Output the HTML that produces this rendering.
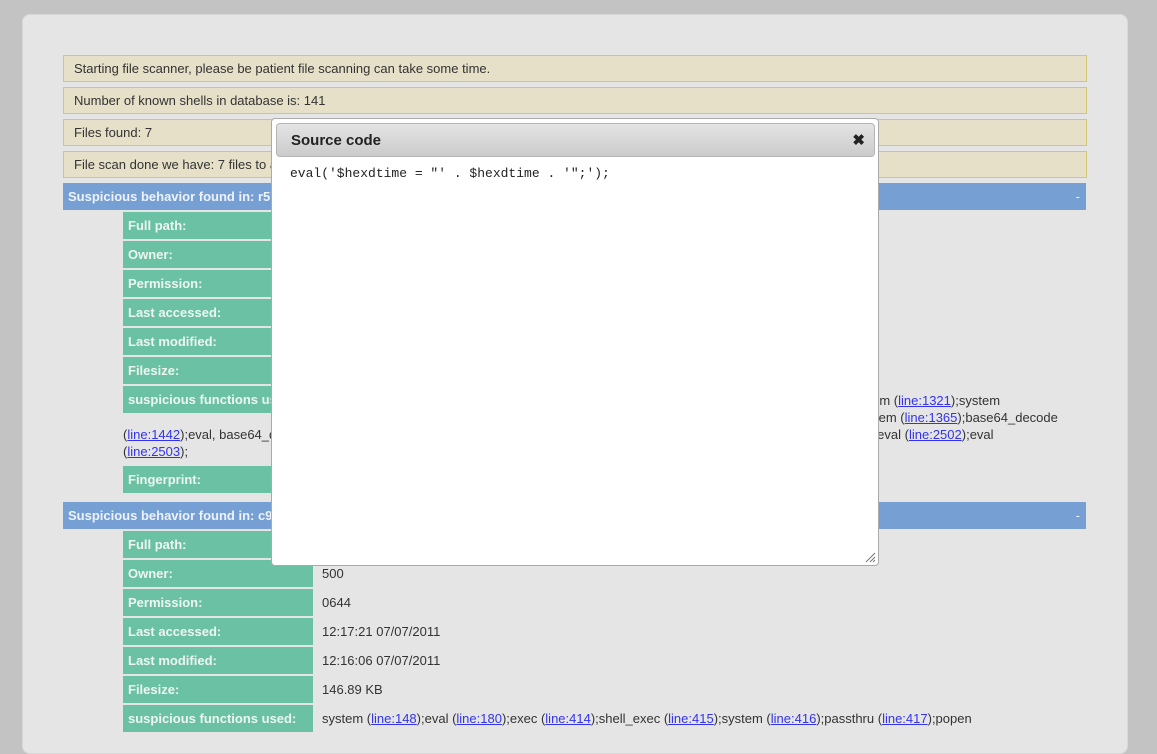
<!DOCTYPE html>
<html><head><style>
*{margin:0;padding:0;box-sizing:border-box}
body{width:1157px;height:729px;background:#c3c3c3;font-family:Tahoma,"Liberation Sans",sans-serif;font-size:13px;color:#333;position:relative;overflow:hidden}
.wrap{position:absolute;left:22px;top:14px;width:1106px;height:740px;background:#e5e5e5;border-radius:8px;border:1px solid #d8d8d8}
.a{position:absolute}
.msg{position:absolute;left:63px;width:1024px;height:27px;background:#e5e0c7;border:1px solid #d5c670;padding-left:10px;line-height:25px}
.bar{position:absolute;left:63px;width:1023px;height:27px;background:#76a0d3;color:#eef2fa;font-weight:bold;padding-left:5px;line-height:27px}
.bar span{position:absolute;right:6px;top:0;font-weight:normal}
.lab{position:absolute;left:123px;width:190px;height:27px;background:#6bc1a4;color:#eef6f1;font-weight:bold;padding-left:5px;line-height:27px}
.val{position:absolute;left:322px;line-height:27px}
a{color:#3333ee;text-decoration:underline}
.dlg{position:absolute;left:271px;top:118px;width:608px;height:448px;background:#fff;border:1px solid #aaa;border-radius:4px}
.hd{position:absolute;left:4px;top:4px;width:599px;height:34px;border:1px solid #b5b5b5;border-radius:4px;background:linear-gradient(#e4e4e4,#cbcbcb);font-weight:bold;font-size:15px;color:#222;padding-left:14px;line-height:34px}
.x{position:absolute;right:9px;top:0;font-size:15px;color:#222}
pre{position:absolute;left:18px;top:47px;font-family:"Liberation Mono",monospace;font-size:13px;color:#222}
</style></head><body>
<div class="wrap"></div>
<div class="msg" style="top:55px">Starting file scanner, please be patient file scanning can take some time.</div>
<div class="msg" style="top:87px">Number of known shells in database is: 141</div>
<div class="msg" style="top:119px">Files found: 7</div>
<div class="msg" style="top:151px">File scan done we have: 7 files to analyze</div>
<div class="bar" style="top:183px">Suspicious behavior found in: r57.php<span>-</span></div>
<div class="lab" style="top:212px">Full path:</div>
<div class="lab" style="top:241px">Owner:</div>
<div class="lab" style="top:270px">Permission:</div>
<div class="lab" style="top:299px">Last accessed:</div>
<div class="lab" style="top:328px">Last modified:</div>
<div class="lab" style="top:357px">Filesize:</div>
<div class="lab" style="top:386px">suspicious functions used:</div>
<div class="a" style="left:862px;top:392px;line-height:17px">stem (<a>line:1321</a>);system<br>ystem (<a>line:1365</a>);base64_decode<br>1);eval (<a>line:2502</a>);eval</div>
<div class="a" style="left:123px;top:426px;line-height:17px">(<a>line:1442</a>);eval, base64_decode<br>(<a>line:2503</a>);</div>
<div class="lab" style="top:466px">Fingerprint:</div>
<div class="bar" style="top:502px">Suspicious behavior found in: c99.php<span>-</span></div>
<div class="lab" style="top:531px">Full path:</div>
<div class="lab" style="top:560px">Owner:</div><div class="val" style="top:560px">500</div>
<div class="lab" style="top:589px">Permission:</div><div class="val" style="top:589px">0644</div>
<div class="lab" style="top:618px">Last accessed:</div><div class="val" style="top:618px">12:17:21 07/07/2011</div>
<div class="lab" style="top:647px">Last modified:</div><div class="val" style="top:647px">12:16:06 07/07/2011</div>
<div class="lab" style="top:676px">Filesize:</div><div class="val" style="top:676px">146.89 KB</div>
<div class="lab" style="top:705px">suspicious functions used:</div><div class="val" style="top:705px">system (<a>line:148</a>);eval (<a>line:180</a>);exec (<a>line:414</a>);shell_exec (<a>line:415</a>);system (<a>line:416</a>);passthru (<a>line:417</a>);popen</div>
<div class="dlg">
<div class="hd">Source code<span class="x">✖</span></div>
<pre>eval('$hexdtime = "' . $hexdtime . '";');</pre>
<svg class="a" style="right:2px;bottom:2px" width="11" height="11"><path d="M10 1L1 10M10 5L5 10M10 8L8 10" stroke="#777" stroke-width="1"/></svg>
</div>
</body></html>
